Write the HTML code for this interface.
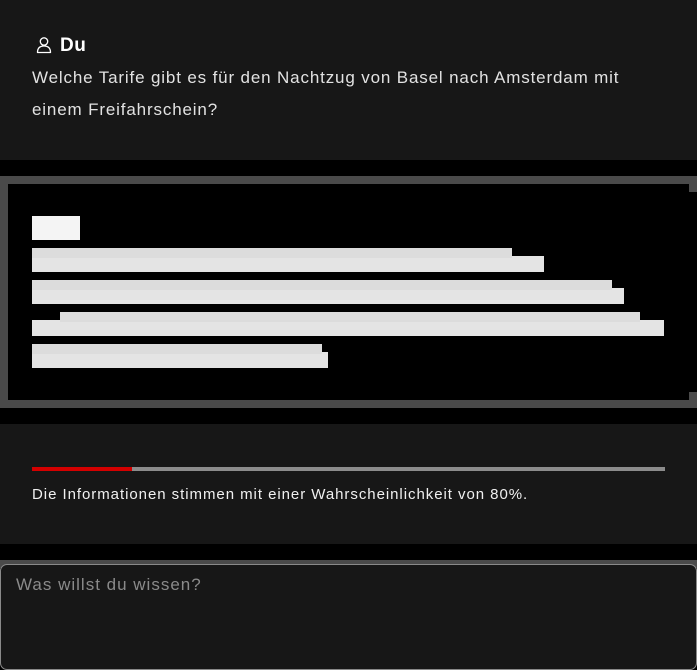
<!DOCTYPE html>
<html><head><meta charset="utf-8"><style>
*{margin:0;padding:0;box-sizing:border-box}
body{width:697px;height:668px;background:#000;position:relative;overflow:hidden;font-family:"Liberation Sans",sans-serif}
.a{position:absolute}
.sec{background:#171717}
.bar{position:absolute;background:#e4e4e4}
</style></head><body>
<div class="a sec" style="left:0;top:0;width:697px;height:160px"></div>
<div class="a" style="left:36px;top:36px">
<svg width="16" height="18" viewBox="0 0 16 18"><circle cx="8" cy="5.5" r="3.7" fill="none" stroke="#fff" stroke-width="1.3"/><path d="M1.5 16.5 C1.5 11.5 4.5 10 8 10 C11.5 10 14.5 11.5 14.5 16.5 Z" fill="none" stroke="#fff" stroke-width="1.3" stroke-linejoin="round"/></svg></div>
<div class="a" style="left:60px;top:34px;color:#fff;font-weight:bold;font-size:19px;line-height:24px;letter-spacing:0.5px">Du</div>
<div class="a" style="left:32px;top:62px;width:650px;color:#e2e2e2;font-size:17px;line-height:32px;letter-spacing:0.85px">Welche Tarife gibt es für den Nachtzug von Basel nach Amsterdam mit<br>einem Freifahrschein?</div>

<div class="a" style="left:0;top:176px;width:697px;height:8px;background:#4a4a4a"></div>
<div class="a" style="left:0;top:400px;width:697px;height:8px;background:#4a4a4a"></div>
<div class="a" style="left:0;top:176px;width:8px;height:232px;background:#4a4a4a"></div>
<div class="a" style="left:689px;top:184px;width:8px;height:8px;background:#4a4a4a"></div>
<div class="a" style="left:689px;top:392px;width:8px;height:8px;background:#4a4a4a"></div>
<div class="bar" style="left:32px;top:216px;width:48px;height:24px;background:#f4f4f4"></div>
<div class="bar" style="left:32px;top:256px;width:512px;height:16px"></div>
<div class="bar" style="left:32px;top:248px;width:480px;height:10px;background:#dcdcdc"></div>
<div class="bar" style="left:32px;top:288px;width:592px;height:16px"></div>
<div class="bar" style="left:32px;top:280px;width:580px;height:10px;background:#dcdcdc"></div>
<div class="bar" style="left:32px;top:320px;width:632px;height:16px"></div>
<div class="bar" style="left:60px;top:312px;width:580px;height:10px;background:#dcdcdc"></div>
<div class="bar" style="left:32px;top:352px;width:296px;height:16px"></div>
<div class="bar" style="left:32px;top:344px;width:290px;height:10px;background:#dcdcdc"></div>

<div class="a sec" style="left:0;top:424px;width:697px;height:120px"></div>
<div class="a" style="left:32px;top:467px;width:633px;height:4px;background:#8c8c8c"></div>
<div class="a" style="left:32px;top:467px;width:100px;height:4px;background:#d40000"></div>
<div class="a" style="left:32px;top:484px;color:#f0f0f0;font-size:15px;line-height:22px;letter-spacing:0.95px;white-space:nowrap">Die Informationen stimmen mit einer Wahrscheinlichkeit von 80%.</div>

<div class="a" style="left:0;top:560px;width:697px;height:8px;background:#4a4a4a"></div>
<div class="a" style="left:0;top:564px;width:697px;height:106px;background:#171717;border:1px solid #8a8a8a;border-radius:7px"></div>
<div class="a" style="left:16px;top:573px;color:#8a8a8a;font-size:17px;line-height:24px;letter-spacing:1px">Was willst du wissen?</div>
</body></html>
